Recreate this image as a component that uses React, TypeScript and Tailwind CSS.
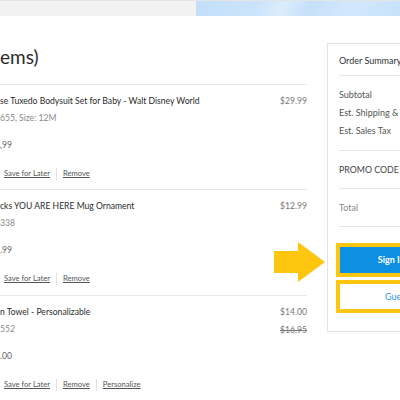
import React from "react";

type Item = {
  title: string;
  detail: string;
  each: string;
  price: string;
  was?: string;
  personalize?: boolean;
};

const items: Item[] = [
  {
    title: "se Tuxedo Bodysuit Set for Baby - Walt Disney World",
    detail: "655, Size: 12M",
    each: ",99",
    price: "$29.99",
  },
  {
    title: "cks YOU ARE HERE Mug Ornament",
    detail: "338",
    each: ".99",
    price: "$12.99",
  },
  {
    title: "n Towel - Personalizable",
    detail: "552",
    each: ".00",
    price: "$14.00",
    was: "$16.95",
    personalize: true,
  },
];

function Sep() {
  return <span className="mx-[6px] h-[12px] w-px bg-[#e2e2e2]" />;
}

function CartItem({ item, first }: { item: Item; first: boolean }) {
  return (
    <div className={`${first ? "h-[105px]" : "h-[106px]"} border-t border-[#e6e6e6] pt-[10px]`}>
      <div className="flex items-start justify-between">
        <div className="flex flex-col">
          <p className="text-[8.6px] leading-[12px] text-[#2b2b2b]">{item.title}</p>
          <p className="mt-[5px] text-[8.6px] leading-[12px] text-[#8a8a8a]">{item.detail}</p>
          <p className="mt-[15px] text-[8.6px] leading-[12px] text-[#666]">{item.each}</p>
        </div>
        <div className="flex flex-col items-end text-[8.6px] leading-[12px] text-[#777]">
          <span>{item.price}</span>
          {item.was ? <span className="mt-[6px] line-through">{item.was}</span> : null}
        </div>
      </div>
      <div className="mt-[17px] flex h-[12px] items-center pl-[4px] text-[7.6px] text-[#555]">
        <span className="underline">Save for Later</span>
        <Sep />
        <span className="underline">Remove</span>
        {item.personalize ? (
          <>
            <Sep />
            <span className="underline">Personalize</span>
          </>
        ) : null}
      </div>
    </div>
  );
}

export default function App() {
  return (
    <div className="relative h-[400px] w-[400px] overflow-hidden bg-white font-['Lato',sans-serif]">
      {/* top banner */}
      <div className="flex h-[16px] border-t border-[#e4e4e4]">
        <div className="flex-1 bg-[#f2f2f2]" />
        <div className="w-[204px] bg-[linear-gradient(110deg,#c2def9_0%,#cbe4fb_30%,#dcedfd_42%,#c6e0fa_55%,#d2e8fc_75%,#c8e2fb_100%)]" />
      </div>

      <div className="flex">
        {/* cart list */}
        <div className="w-[307px] shrink-0">
          <h1 className="pt-[28px] pb-[14px] text-[19px] font-normal leading-[26px] text-[#2b2b2b]">ems)</h1>
          {items.map((item, i) => (
            <CartItem key={item.price} item={item} first={i === 0} />
          ))}
        </div>

        {/* order summary */}
        <div className="ml-[20px] mt-[27px] h-[289px] w-[150px] shrink-0 border border-[#e3e3e3]">
          <div className="pl-[11px]">
            <div className="flex h-[32px] items-center border-b border-[#e6e6e6] pt-[3px] text-[9px] text-[#333]">
              Order Summary
            </div>
            <div className="flex flex-col gap-[6px] border-b border-[#e6e6e6] pt-[13px] pb-[13px] text-[9px] leading-[12px] text-[#555]">
              <span>Subtotal</span>
              <span className="whitespace-nowrap">Est. Shipping &amp; Handling</span>
              <span>Est. Sales Tax</span>
            </div>
            <div className="flex h-[38px] items-center border-b border-[#e6e6e6] text-[8.8px] text-[#444]">
              PROMO CODE
            </div>
            <div className="flex h-[38px] items-center border-b border-[#e6e6e6] text-[9px] text-[#888]">
              Total
            </div>
          </div>
          <div className="mt-[16px] flex flex-col gap-[3px] pl-[8px]">
            <div className="w-[166px] border-[4px] border-[#ffc60f]">
              <div className="flex h-[26px] items-center justify-center bg-[#0d8fe2] text-[9px] font-bold text-white">
                Sign In to Check Out
              </div>
            </div>
            <div className="w-[166px] border-[4px] border-[#ffc60f]">
              <div className="flex h-[25px] items-center justify-center bg-white text-[9px] text-[#2f95e0]">
                Guest Check Out
              </div>
            </div>
          </div>
        </div>
      </div>

      {/* callout arrow */}
      <svg className="absolute left-[274px] top-[242px]" width="52" height="41" viewBox="0 0 52 41">
        <path d="M0 9H24V0L51 20L24 40V31H0Z" fill="#ffc60f" />
      </svg>
    </div>
  );
}
